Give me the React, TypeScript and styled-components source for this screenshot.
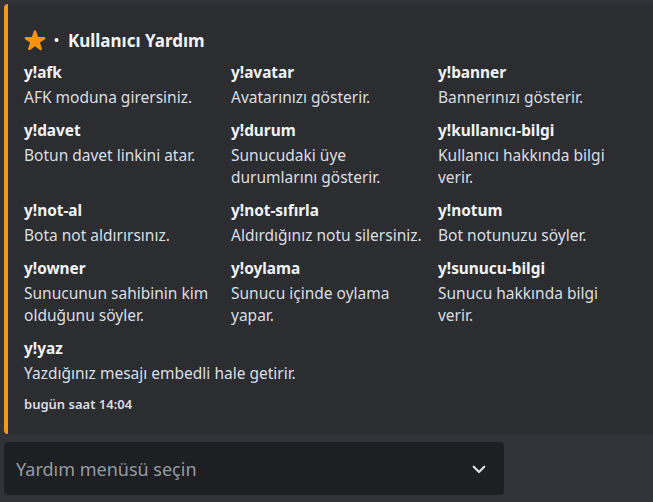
import styled, { createGlobalStyle } from "styled-components";

const GlobalStyle = createGlobalStyle`
  html, body {
    margin: 0;
    padding: 0;
    background: #313338;
    font-family: "Noto Sans", "Open Sans", sans-serif;
  }
`;

const Page = styled.div`
  width: 653px;
  height: 502px;
  overflow: hidden;
  padding: 4px 0 0 4px;
  box-sizing: border-box;
  display: flex;
  flex-direction: column;
  gap: 8px;
`;

const Embed = styled.div`
  background: #2b2d31;
  border-left: 4px solid #f8980c;
  border-radius: 4px 0 0 4px;
  padding: 24px 16px 18px 16px;
  display: flex;
  flex-direction: column;
  box-sizing: border-box;
  height: 430px;
`;

const Title = styled.div`
  display: flex;
  align-items: center;
  height: 24px;
  color: #f2f3f5;
  font-size: 17px;
  font-weight: 700;
`;

const Dot = styled.span`
  margin: 0 9px 0 8px;
  font-size: 13px;
  font-weight: 700;
`;

const Fields = styled.div`
  display: grid;
  grid-template-columns: repeat(3, 207px);
  row-gap: 10px;
  margin-top: 8px;
`;

const Field = styled.div<{ $wide?: boolean }>`
  display: flex;
  flex-direction: column;
  grid-column: ${(p) => (p.$wide ? "1 / -1" : "auto")};
`;

const FieldName = styled.div`
  color: #f2f3f5;
  font-size: 15.4px;
  font-weight: 700;
  line-height: 26px;
`;

const FieldValue = styled.div`
  color: #dbdee1;
  font-size: 15.5px;
  line-height: 22px;
  padding-right: 8px;
`;

const Footer = styled.div`
  color: #dbdee1;
  font-size: 13px;
  font-weight: 600;
  margin-top: 10px;
  line-height: 20px;
`;

const Select = styled.div`
  width: 500px;
  height: 53px;
  background: #1e1f22;
  border-radius: 4px;
  display: flex;
  align-items: center;
  justify-content: space-between;
  padding: 0 16px 0 12px;
  box-sizing: border-box;
`;

const Placeholder = styled.span`
  color: #949ba4;
  font-size: 18px;
`;

const fields = [
  ["y!afk", "AFK moduna girersiniz."],
  ["y!avatar", "Avatarınızı gösterir."],
  ["y!banner", "Bannerınızı gösterir."],
  ["y!davet", "Botun davet linkini atar."],
  ["y!durum", "Sunucudaki üye durumlarını gösterir."],
  ["y!kullanıcı-bilgi", "Kullanıcı hakkında bilgi verir."],
  ["y!not-al", "Bota not aldırırsınız."],
  ["y!not-sıfırla", "Aldırdığınız notu silersiniz."],
  ["y!notum", "Bot notunuzu söyler."],
  ["y!owner", "Sunucunun sahibinin kim olduğunu söyler."],
  ["y!oylama", "Sunucu içinde oylama yapar."],
  ["y!sunucu-bilgi", "Sunucu hakkında bilgi verir."],
  ["y!yaz", "Yazdığınız mesajı embedli hale getirir."],
];

const Star = () => (
  <svg width="22" height="22" viewBox="0 0 36 36">
    <path
      fill="#f7930e"
      d="M27.287 34.627c-.404 0-.806-.124-1.152-.371L18 28.422l-8.135 5.834a1.97 1.97 0 0 1-2.312-.008 1.971 1.971 0 0 1-.721-2.194l3.034-9.792-8.062-5.681a1.980 1.980 0 0 1-.708-2.203 1.978 1.978 0 0 1 1.866-1.363L12.947 13l3.179-9.549a1.976 1.976 0 0 1 3.749 0L23 13l10.036.015a1.975 1.975 0 0 1 1.159 3.566l-8.062 5.681 3.034 9.792a1.970 1.970 0 0 1-.72 2.194 1.957 1.957 0 0 1-1.16.379z"
    />
  </svg>
);

const Chevron = () => (
  <svg width="18" height="18" viewBox="0 0 24 24">
    <path
      d="M5 9l7 7 7-7"
      fill="none"
      stroke="#dbdee1"
      strokeWidth="3"
      strokeLinecap="round"
      strokeLinejoin="round"
    />
  </svg>
);

export default function App() {
  return (
    <>
      <GlobalStyle />
      <Page>
        <Embed>
          <Title>
            <Star />
            <Dot>•</Dot>
            Kullanıcı Yardım
          </Title>
          <Fields>
            {fields.map(([name, value], i) => (
              <Field key={name} $wide={i === fields.length - 1}>
                <FieldName>{name}</FieldName>
                <FieldValue>{value}</FieldValue>
              </Field>
            ))}
          </Fields>
          <Footer>bugün saat 14:04</Footer>
        </Embed>
        <Select>
          <Placeholder>Yardım menüsü seçin</Placeholder>
          <Chevron />
        </Select>
      </Page>
    </>
  );
}
